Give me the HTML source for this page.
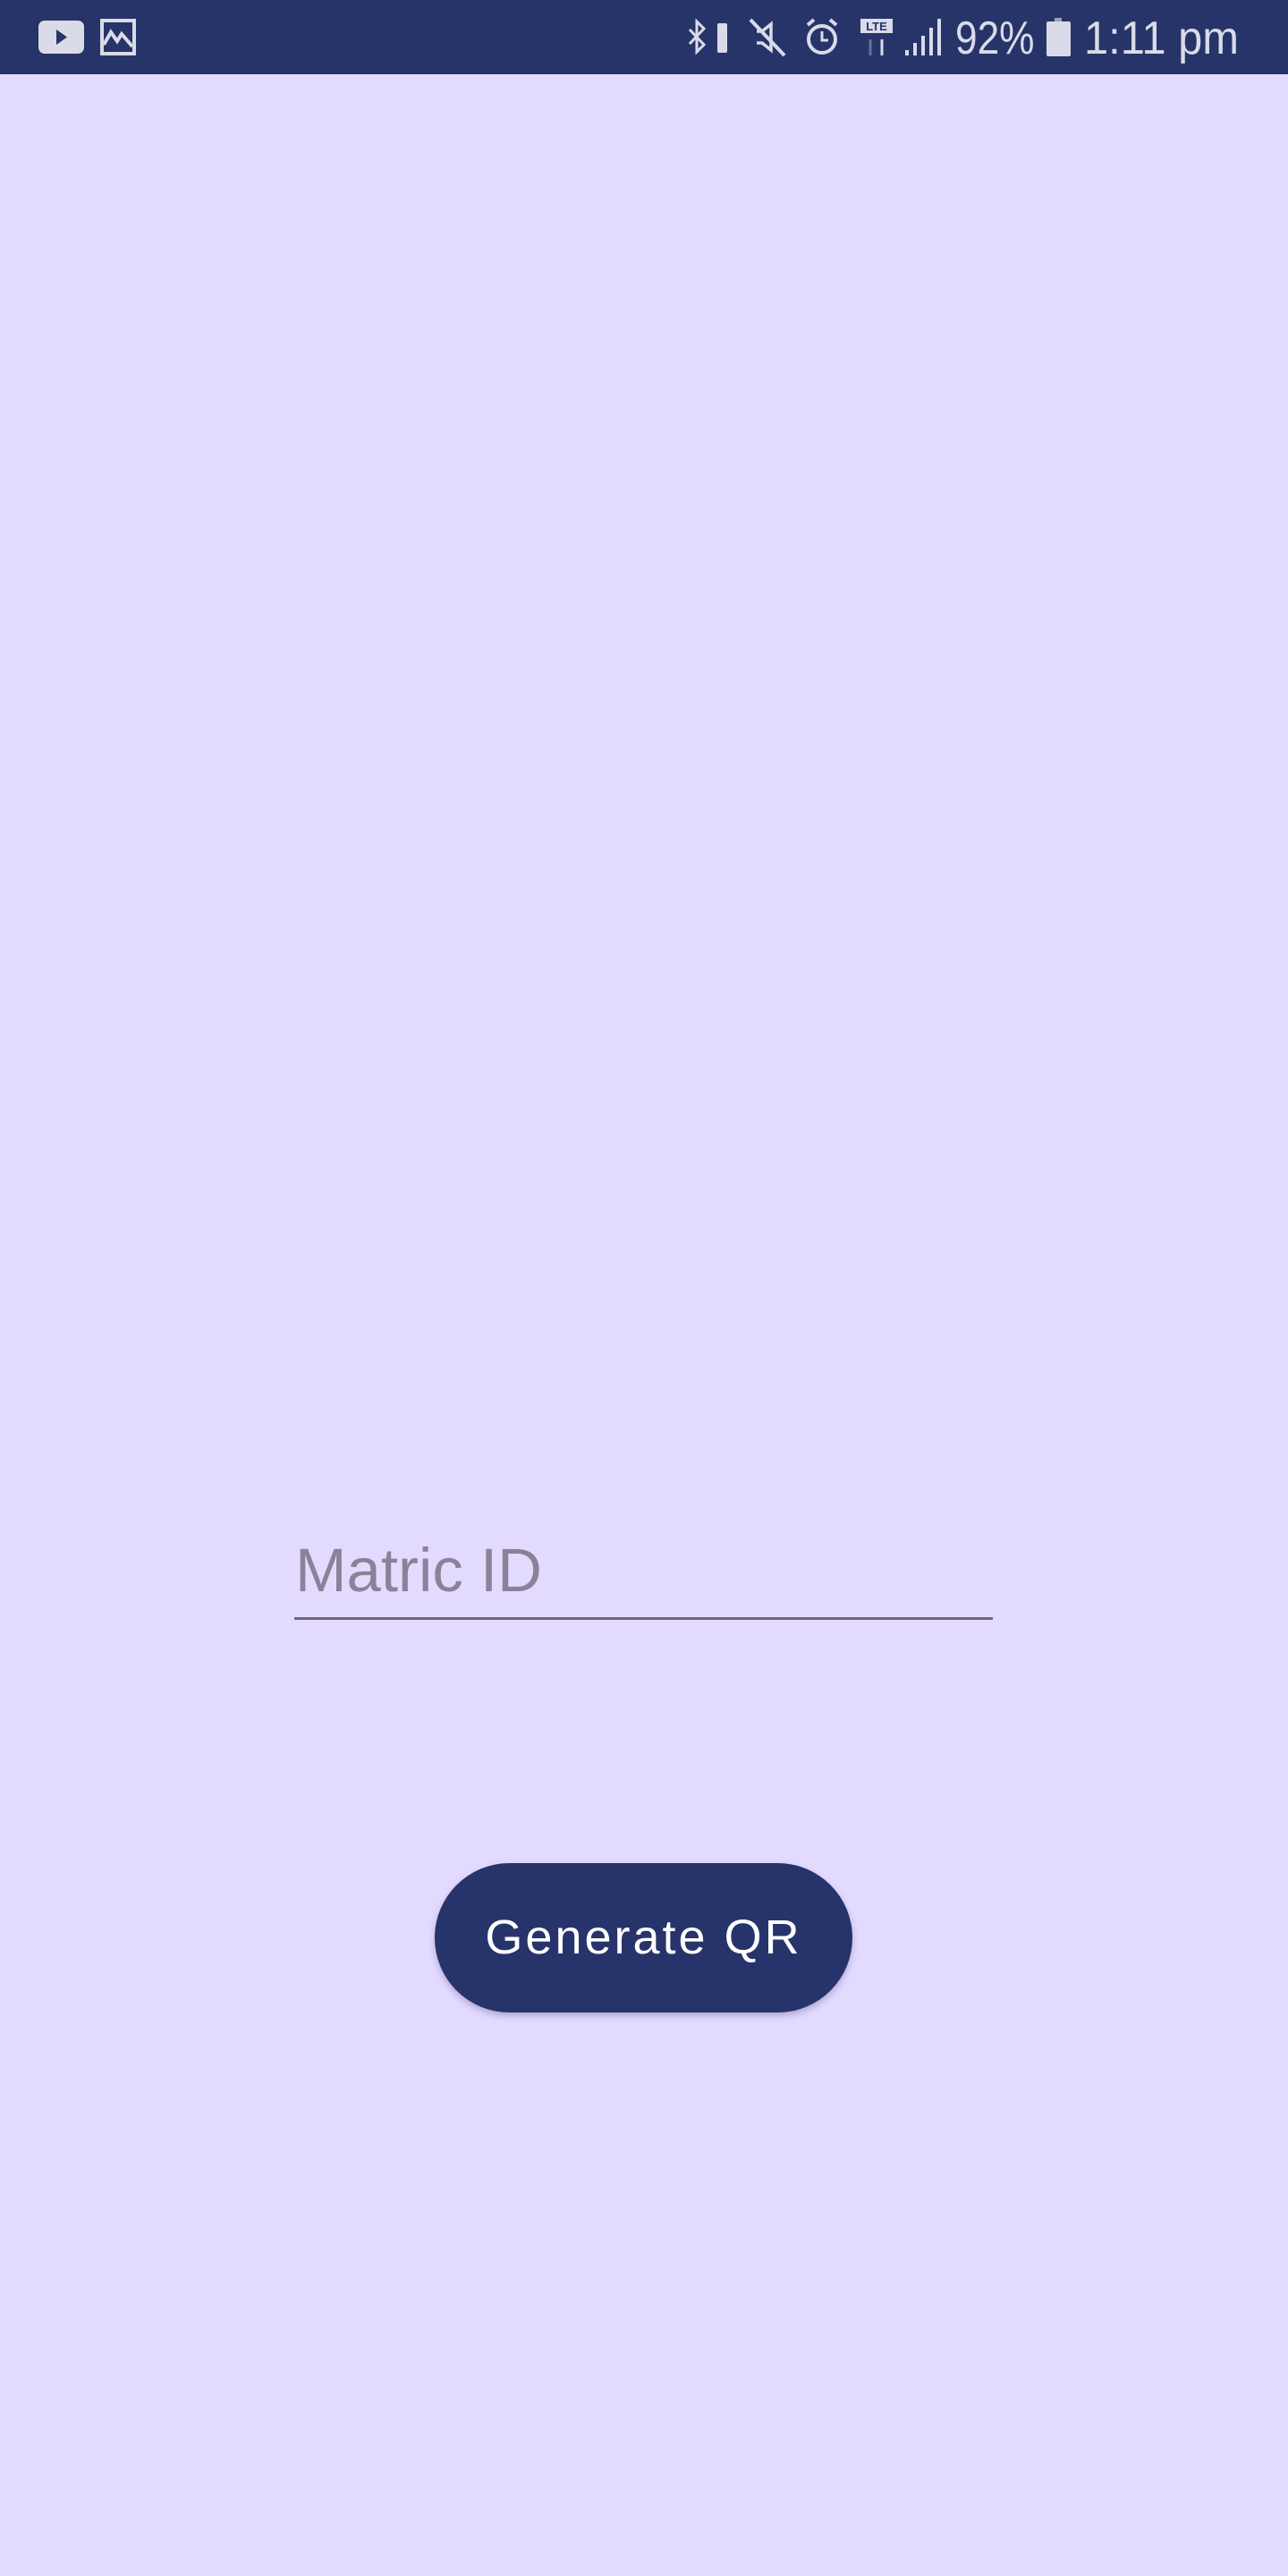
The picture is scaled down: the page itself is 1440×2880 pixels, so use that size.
<!DOCTYPE html>
<html><head><meta charset="utf-8">
<style>
html,body{margin:0;padding:0}
body{width:1440px;height:2880px;background:#e3dbff;position:relative;overflow:hidden;font-family:"Liberation Sans",sans-serif}
.bar{position:absolute;left:0;top:0;width:1440px;height:83px;background:#273469}
.st{position:absolute;color:#d9dbe8;font-size:52px;top:16px;line-height:54px;transform-origin:left top}
.label{position:absolute;left:330px;top:1716px;font-size:69px;color:#8b8299}
.line{position:absolute;left:329px;top:1808px;width:781px;height:3px;background:#6f6680}
.btn{position:absolute;left:486px;top:2083px;width:467px;height:167px;border-radius:84px;background:#27336b;box-shadow:0 4px 8px rgba(60,50,110,.3);color:#fff;font-size:54px;letter-spacing:3px;text-align:center;line-height:167px}
</style></head><body>
<div class="bar">
<svg style="position:absolute;left:0;top:0" width="1440" height="83">
<rect x="43" y="23" width="51" height="37" rx="7" fill="#d9dbe8"/>
<polygon points="63,33 63,50 75,41.5" fill="#273469"/>
<rect x="114" y="23" width="36" height="37" fill="none" stroke="#d9dbe8" stroke-width="4"/>
<polyline points="116,50 124,36 131,46 136,38 148,52" fill="none" stroke="#d9dbe8" stroke-width="4"/>
<polyline points="771,33 787,50 779,58 779,24 787,32 771,49" fill="none" stroke="#d9dbe8" stroke-width="3"/>
<rect x="802" y="26" width="11" height="33" rx="2" fill="#d9dbe8"/>
<polyline points="846,35 852,35 862,27 862,56 852,48 846,48 Z" fill="none" stroke="#d9dbe8" stroke-width="3.5"/>
<line x1="839" y1="22" x2="877" y2="62" stroke="#d9dbe8" stroke-width="4"/>
<circle cx="919" cy="44" r="15" fill="none" stroke="#d9dbe8" stroke-width="4"/>
<polyline points="919,35 919,45 926,45" fill="none" stroke="#d9dbe8" stroke-width="3"/>
<line x1="903" y1="28" x2="910" y2="22" stroke="#d9dbe8" stroke-width="4"/>
<line x1="935" y1="28" x2="928" y2="22" stroke="#d9dbe8" stroke-width="4"/>
<rect x="962" y="21" width="36" height="16" fill="#d9dbe8"/>
<text x="980" y="34" font-size="13" font-weight="bold" text-anchor="middle" fill="#273469" font-family="Liberation Sans">LTE</text>
<line x1="973" y1="44" x2="973" y2="62" stroke="#6a7199" stroke-width="3"/>
<line x1="986" y1="44" x2="986" y2="62" stroke="#d9dbe8" stroke-width="3"/>
<rect x="1012" y="56" width="4" height="6" fill="#d9dbe8"/>
<rect x="1021" y="48" width="4" height="14" fill="#d9dbe8"/>
<rect x="1030" y="40" width="4" height="22" fill="#d9dbe8"/>
<rect x="1039" y="31" width="4" height="31" fill="#d9dbe8"/>
<rect x="1048" y="21" width="4" height="41" fill="#d9dbe8"/>
<rect x="1179" y="20" width="8" height="5" fill="#9aa0bd"/>
<rect x="1170" y="24" width="27" height="39" rx="2" fill="#d9dbe8"/>
</svg>
<div class="st" style="left:1068px;transform:scaleX(0.85)">92%</div>
<div class="st" style="left:1212px;transform:scaleX(0.94)">1:11 pm</div>
</div>
<div class="label">Matric ID</div>
<div class="line"></div>
<div class="btn">Generate QR</div>
</body></html>
